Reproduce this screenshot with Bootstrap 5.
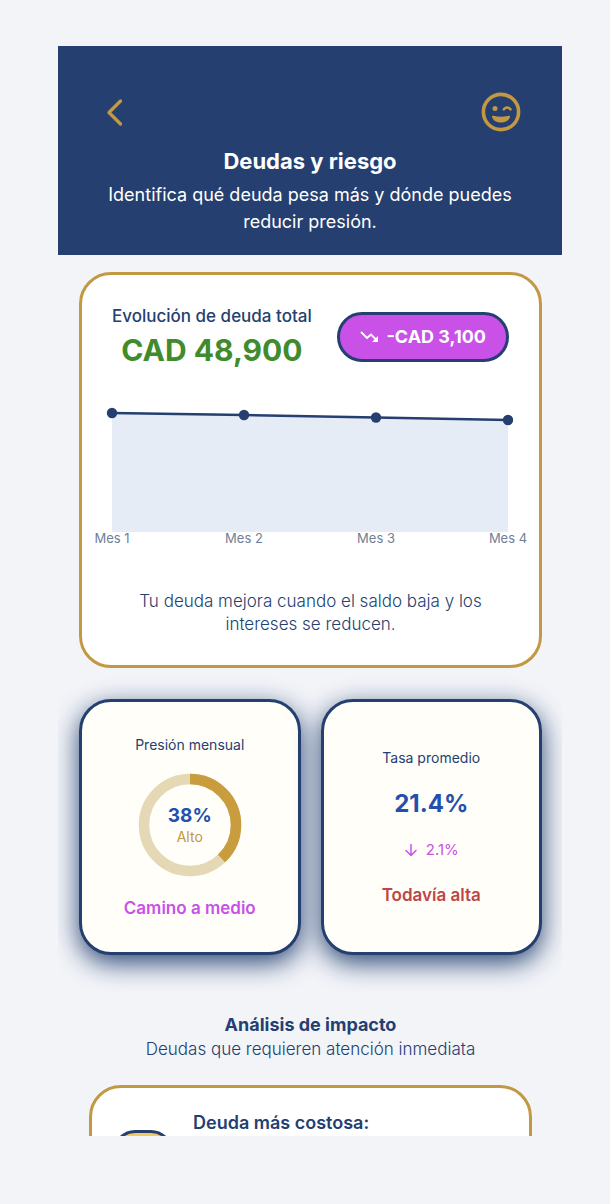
<!DOCTYPE html>
<html lang="es">
<head>
<meta charset="utf-8">
<meta name="viewport" content="width=device-width, initial-scale=1">
<title>Deudas y riesgo</title>
<link href="https://cdn.jsdelivr.net/npm/bootstrap@5.3.0/dist/css/bootstrap.min.css" rel="stylesheet">
<style>
  :root { --navy: #243f70; --gold: #c29842; --pink: #c951e7; --paper: #f2f4f8; }
  body { font-family: Inter, "Liberation Sans", sans-serif; background: var(--paper); color: var(--navy); }
  .stage { height: 100vh; padding: 46px 48px 68px 58px; }
  .screen { height: 100%; overflow: hidden; }
  .topbar { background: var(--navy); padding: 46px 41px 20px; }
  .icon-btn { background: none; border: 0; padding: 0; color: var(--gold); line-height: 0; }
  .title-main { font-size: 22px; line-height: 28px; font-weight: 700; margin-top: 15px; }
  .subtitle { font-size: 18px; line-height: 27px; padding-top: 6px; }
  .content { padding: 17px 20px 0 21px; }
  .panel { border: 3px solid var(--gold); border-radius: 32px; background: #fff; }
  .panel-head { padding: 28px 30px 0; }
  .label-lg { font-size: 17px; line-height: 26px; font-weight: 500; }
  .amount { font-size: 30px; line-height: 42px; font-weight: 700; color: #408c2c; }
  .pill { background: var(--pink); border: 3px solid var(--navy); border-radius: 25px; color: #fff; font-size: 18px; line-height: 44px; font-weight: 700; padding: 0 20px; }
  .chart { margin-top: 25px; }
  .axis-text { font-size: 13px; fill: #718096; }
  .note { font-size: 17px; line-height: 23px; font-weight: 300; padding: 40px 50px 29px; }
  .metrics { margin-top: 31px; column-gap: 20px; }
  .metric { border: 3px solid var(--navy); border-radius: 32px; background: #fffef9; min-height: 256px; box-shadow: 0 8px 26px rgba(36, 63, 112, .95); }
  .metric-label { font-size: 14px; line-height: 20px; font-weight: 400; }
  .gauge { width: 104px; height: 104px; margin: 18px 0 20px; }
  .gauge svg { position: absolute; inset: 0; }
  .gauge-value { font-size: 19px; line-height: 24px; font-weight: 700; color: #244faf; }
  .gauge-level { font-size: 14px; line-height: 18px; color: var(--gold); }
  .rate { font-size: 24px; line-height: 32px; font-weight: 700; color: #244faf; }
  .delta { font-size: 15px; line-height: 20px; color: var(--pink); }
  .verdict { font-size: 17px; line-height: 22px; font-weight: 600; }
  .text-pink { color: var(--pink); }
  .text-brick { color: #bd4747; }
  .section-title { font-size: 18px; line-height: 24px; font-weight: 700; margin-top: 58px; }
  .section-sub { font-size: 17px; line-height: 24px; font-weight: 300; }
  .debt { margin: 24px 10px 0; padding: 23px 21px; gap: 20px; }
  .debt-icon { width: 60px; height: 60px; border: 3px solid var(--navy); border-radius: 22px; background: #f5c95c; margin-top: 19px; }
  .debt-title { font-size: 18px; line-height: 24px; font-weight: 600; }
</style>
</head>
<body>
<div class="stage">
  <main class="screen">
    <header class="topbar text-white text-center">
      <div class="d-flex justify-content-between align-items-center ps-1">
        <button class="icon-btn" type="button" aria-label="Volver">
          <svg width="28" height="40" viewBox="0 0 28 40" fill="none" stroke="currentColor" stroke-width="3.4" stroke-linecap="round" stroke-linejoin="round"><path d="M17.500 9 6 20.500 17.500 32"/></svg>
        </button>
        <button class="icon-btn" type="button" aria-label="Asistente">
          <svg width="40" height="40" viewBox="0 0 40 40" fill="none" stroke="currentColor">
            <circle cx="20" cy="20" r="17.600" stroke-width="3.600"/>
            <circle cx="14" cy="16.500" r="2.500" fill="currentColor" stroke="none"/>
            <path d="M22.800 17.300Q26 13.800 29.500 17.300" stroke-width="2.600" stroke-linecap="round"/>
            <path d="M12.300 23.700Q20 26 27.700 23.700Q29.400 23.400 29 25C27.800 28.800 24 30.500 20 30.500S12.200 28.800 11 25Q10.600 23.400 12.300 23.700Z" fill="currentColor" stroke="none"/>
          </svg>
        </button>
      </div>
      <h1 class="title-main mb-0">Deudas y riesgo</h1>
      <p class="subtitle mb-0">Identifica qué deuda pesa más y dónde puedes reducir presión.</p>
    </header>

    <div class="content">
      <section class="panel">
        <div class="panel-head d-flex justify-content-between align-items-center">
          <div class="text-center">
            <h2 class="label-lg mb-0">Evolución de deuda total</h2>
            <div class="amount">CAD 48,900</div>
          </div>
          <div class="pill d-flex align-items-center gap-1">
            <svg width="22" height="18" viewBox="0 0 22 18" fill="none" stroke="currentColor" stroke-width="2"><path d="M1 4 7 10 11 6.500 17 12.500"/><path d="M18 8V14H12Z" fill="currentColor" stroke="none"/></svg>
            <span>-CAD 3,100</span>
          </div>
        </div>
        <svg class="chart d-block w-100" viewBox="0 0 457 154" role="img" aria-label="Deuda total por mes">
          <path d="M30 17 162 19 294 21.500 426 24V136H30Z" fill="#e5ecf6"/>
          <path d="M30 17 162 19 294 21.500 426 24" fill="none" stroke="#243f70" stroke-width="2.600"/>
          <g fill="#243f70"><circle cx="30" cy="17" r="5.200"/><circle cx="162" cy="19" r="5.200"/><circle cx="294" cy="21.500" r="5.200"/><circle cx="426" cy="24" r="5.200"/></g>
          <g class="axis-text" text-anchor="middle"><text x="30" y="147">Mes 1</text><text x="162" y="147">Mes 2</text><text x="294" y="147">Mes 3</text><text x="426" y="147">Mes 4</text></g>
        </svg>
        <p class="note text-center mb-0">Tu deuda mejora cuando el saldo baja y los intereses se reducen.</p>
      </section>

      <div class="metrics row gx-0">
        <section class="metric col d-flex flex-column align-items-center justify-content-center">
          <h2 class="metric-label mb-0">Presión mensual</h2>
          <div class="gauge position-relative d-flex flex-column align-items-center justify-content-center">
            <svg viewBox="0 0 104 104" fill="none" stroke-width="10.500" aria-hidden="true">
              <circle cx="52" cy="52" r="46" stroke="#e5d9b5"/>
              <circle cx="52" cy="52" r="46" stroke="#c99c3d" pathLength="100" stroke-dasharray="38 62" transform="rotate(-90 52 52)"/>
            </svg>
            <div class="gauge-value">38%</div>
            <div class="gauge-level">Alto</div>
          </div>
          <div class="verdict text-pink">Camino a medio</div>
        </section>
        <section class="metric col d-flex flex-column align-items-center justify-content-center">
          <h2 class="metric-label mb-0">Tasa promedio</h2>
          <div class="rate my-3 py-1">21.4%</div>
          <div class="delta d-flex align-items-center gap-2">
            <svg width="14" height="16" viewBox="0 0 14 16" fill="none" stroke="currentColor" stroke-width="1.500" stroke-linecap="round" stroke-linejoin="round"><path d="M7 2.500V13.500M2 8.500 7 13.500 12 8.500"/></svg>
            <span>2.1%</span>
          </div>
          <div class="verdict text-brick mt-4">Todavía alta</div>
        </section>
      </div>

      <section>
        <h2 class="section-title text-center mb-0">Análisis de impacto</h2>
        <p class="section-sub text-center mb-0">Deudas que requieren atención inmediata</p>
        <article class="panel debt d-flex align-items-start">
          <div class="debt-icon"></div>
          <h3 class="debt-title mb-0">Deuda más costosa:</h3>
        </article>
      </section>
    </div>
  </main>
</div>
<script src="https://cdn.jsdelivr.net/npm/bootstrap@5.3.0/dist/js/bootstrap.bundle.min.js"></script>
</body>
</html>
